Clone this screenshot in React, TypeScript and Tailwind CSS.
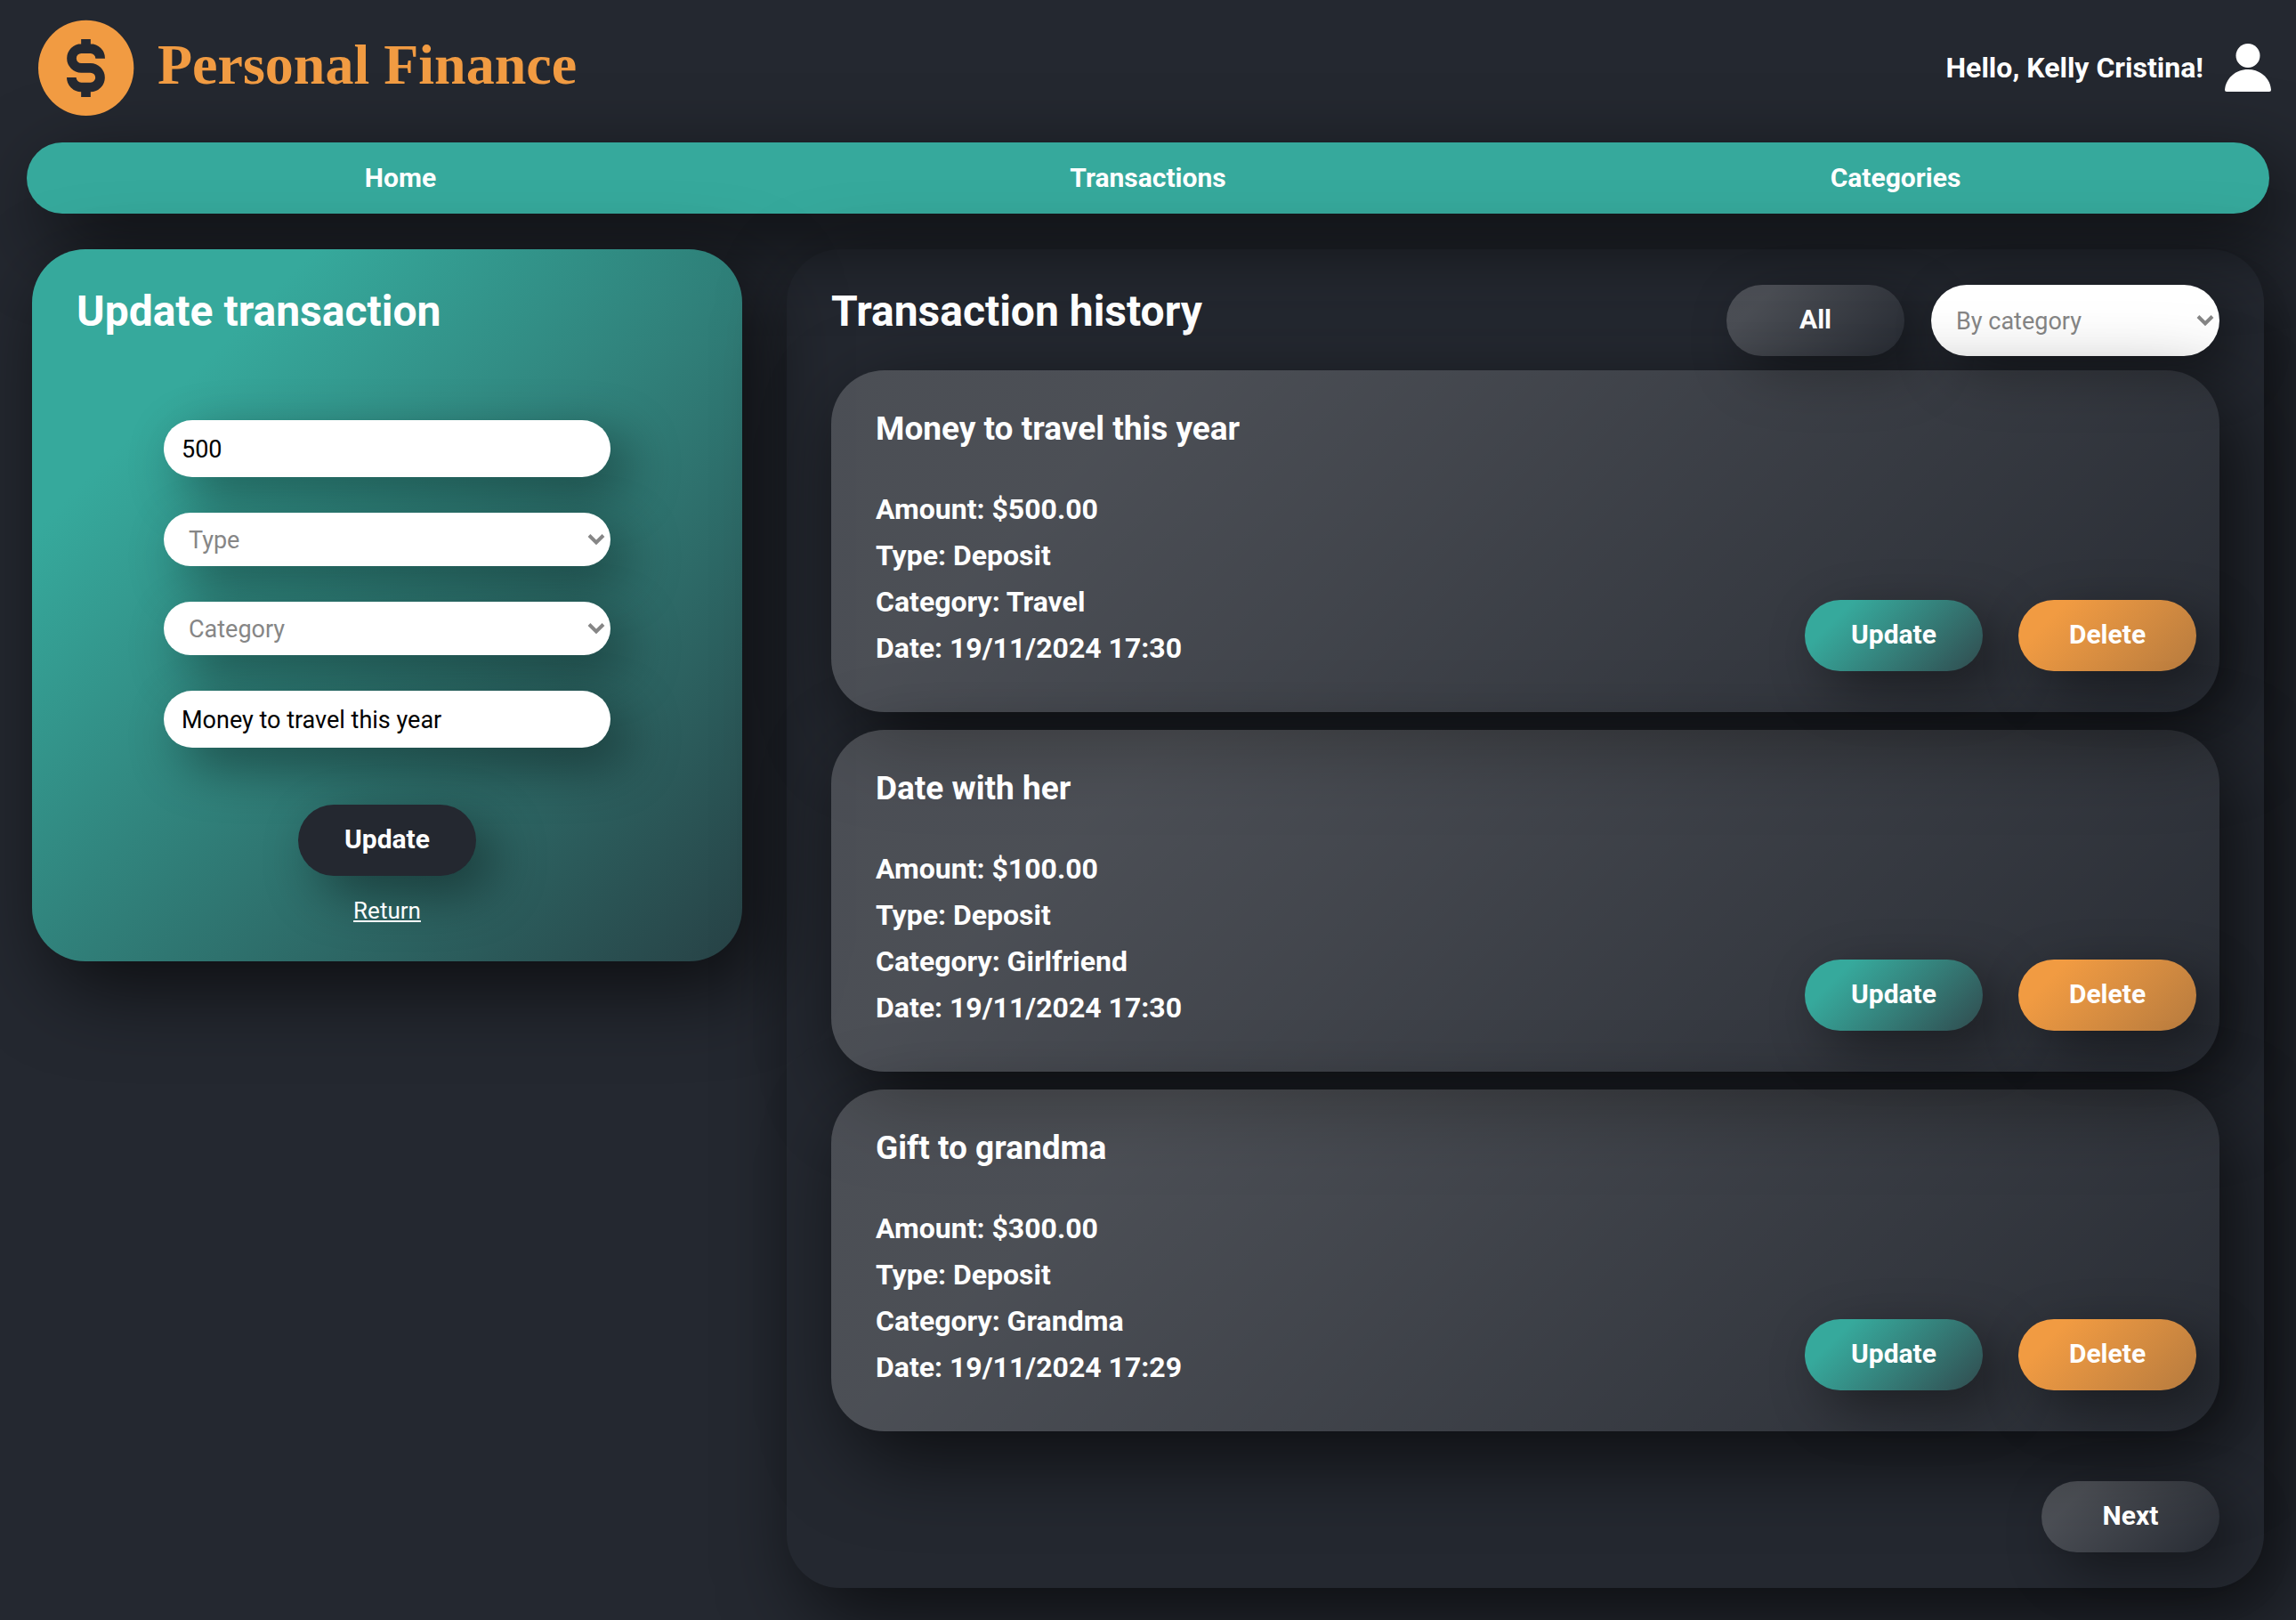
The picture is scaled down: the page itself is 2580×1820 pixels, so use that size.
import { useState } from "react";

type Transaction = {
  title: string;
  amount: string;
  type: string;
  category: string;
  date: string;
};

const transactions: Transaction[] = [
  { title: "Money to travel this year", amount: "$500.00", type: "Deposit", category: "Travel", date: "19/11/2024 17:30" },
  { title: "Date with her", amount: "$100.00", type: "Deposit", category: "Girlfriend", date: "19/11/2024 17:30" },
  { title: "Gift to grandma", amount: "$300.00", type: "Deposit", category: "Grandma", date: "19/11/2024 17:29" },
];

const panelShadow = "shadow-[20px_30px_90px_rgba(0,0,0,0.65)]";
const controlShadow = "shadow-[20px_20px_60px_rgba(0,0,0,0.42)]";
const pill = "h-20 w-[200px] rounded-full pb-1 text-[30px] font-bold text-white " + controlShadow;
const grayGradient = "bg-[linear-gradient(135deg,rgba(255,255,255,0.18)_20%,rgba(255,255,255,0.02))]";
const tealGradient = "bg-[linear-gradient(135deg,#36a99c_20%,rgba(54,169,156,0.2))]";
const orangeGradient = "bg-[linear-gradient(135deg,#f19b42_20%,rgba(241,155,66,0.7))]";
const field = "w-full rounded-[32px] bg-white pt-0.5 text-[27px] outline-none " + controlShadow;

function DollarLogo() {
  return (
    <svg viewBox="0 0 324 324" className="size-[108px]" aria-hidden="true">
      <circle cx="161" cy="163" r="161" fill="#f19b42" />
      <path
        d="M209 131A33 33 0 0 0 176 98H145A32.500 32.500 0 0 0 145 163H176A32.500 32.500 0 0 1 176 228H145A33 33 0 0 1 112 195M160.500 66V98M160.500 228V261"
        fill="none"
        stroke="#242830"
        strokeWidth="32"
      />
    </svg>
  );
}

function PersonIcon() {
  return (
    <svg viewBox="0 0 52 54" className="h-[54px] w-[52px]" fill="#fff" aria-hidden="true">
      <circle cx="26" cy="13.5" r="13.5" />
      <path d="M2 54Q0 54 0 52C1 39 12 29 26 29S51 39 52 52Q52 54 50 54Z" />
    </svg>
  );
}

function SelectBox({ label, options, className }: { label: string; options: string[]; className: string }) {
  return (
    <div className="grid w-full items-center">
      <select aria-label={label} defaultValue="" className={"col-start-1 row-start-1 appearance-none pl-7 text-[#868686] " + className}>
        <option value="">{label}</option>
        {options.map((o) => (
          <option key={o}>{o}</option>
        ))}
      </select>
      <svg viewBox="0 0 20 14" className="pointer-events-none col-start-1 row-start-1 mr-1.5 h-3.5 w-5 justify-self-end" fill="none" stroke="#868686" strokeWidth="4" aria-hidden="true">
        <path d="M2 2.500L10 10.500L18 2.500" />
      </svg>
    </div>
  );
}

function UpdateForm() {
  const [amount, setAmount] = useState("500");
  const [description, setDescription] = useState("Money to travel this year");
  return (
    <section className={"w-[798px] shrink-0 rounded-[60px] px-[50px] pt-10 pb-[38px] " + tealGradient + " " + panelShadow}>
      <h2 className="text-5xl leading-[60px] font-bold">Update transaction</h2>
      <form className="mx-auto mt-[92px] flex w-[502px] flex-col items-center" onSubmit={(e) => e.preventDefault()}>
        <div className="flex w-full flex-col gap-10">
          <input aria-label="Amount" className={field + " h-16 px-5 text-black"} value={amount} onChange={(e) => setAmount(e.target.value)} />
          <SelectBox label="Type" options={["Deposit", "Expense"]} className={field + " h-[60px]"} />
          <SelectBox label="Category" options={["Travel", "Girlfriend", "Grandma"]} className={field + " h-[60px]"} />
          <input aria-label="Description" className={field + " h-16 px-5 text-black"} value={description} onChange={(e) => setDescription(e.target.value)} />
        </div>
        <button type="submit" className={pill + " mt-16 bg-[#242830]"}>Update</button>
        <a href="#" className="mt-5 text-[26px] leading-[38px] underline">Return</a>
      </form>
    </section>
  );
}

function TransactionCard({ item }: { item: Transaction }) {
  return (
    <article className={"flex items-end justify-between rounded-[60px] pt-10 pr-[26px] pb-[46px] pl-[50px] " + grayGradient + " " + panelShadow}>
      <div>
        <h3 className="mb-[38px] text-[37px] leading-[52px] font-bold">{item.title}</h3>
        <div className="text-[32px] leading-[52px] font-bold">
          <p>Amount: {item.amount}</p>
          <p>Type: {item.type}</p>
          <p>Category: {item.category}</p>
          <p>Date: {item.date}</p>
        </div>
      </div>
      <div className="flex gap-10">
        <button className={pill + " " + tealGradient}>Update</button>
        <button className={pill + " " + orangeGradient}>Delete</button>
      </div>
    </article>
  );
}

export default function App() {
  return (
    <div className="min-h-screen overflow-hidden bg-[#242830] pb-9 font-[Roboto,sans-serif] text-white">
      <header className="flex h-40 items-start justify-between pt-[22px] pr-7 pl-[43px]">
        <a href="#" className="flex items-center gap-[26px]">
          <DollarLogo />
          <span className="pb-1.5 font-['Liberation_Serif',serif] text-[64px] leading-[80px] font-bold text-[#f19b42]">Personal Finance</span>
        </a>
        <div className="flex h-[108px] items-center gap-6">
          <span className="text-[32px] font-bold">Hello, Kelly Cristina!</span>
          <PersonIcon />
        </div>
      </header>
      <nav className={"mx-[30px] grid h-20 grid-cols-3 items-center rounded-full bg-[#36a99c] pb-0.5 text-center text-[30px] font-bold " + panelShadow}>
        <a href="#">Home</a>
        <a href="#">Transactions</a>
        <a href="#">Categories</a>
      </nav>
      <main className="mx-9 mt-10 flex items-start gap-[50px]">
        <UpdateForm />
        <section className={"min-w-0 grow rounded-[60px] px-[50px] py-10 " + panelShadow}>
          <div className="mb-4 flex items-start justify-between">
            <h2 className="text-5xl leading-[60px] font-bold">Transaction history</h2>
            <div className="flex gap-[30px]">
              <button className={pill + " shrink-0 " + grayGradient}>All</button>
              <div className="w-[324px]">
                <SelectBox label="By category" options={["Travel", "Girlfriend", "Grandma"]} className={"h-20 w-full rounded-full bg-white pt-0.5 text-[27px] outline-none " + controlShadow} />
              </div>
            </div>
          </div>
          <div className="flex flex-col gap-5">
            {transactions.map((t) => (
              <TransactionCard key={t.title} item={t} />
            ))}
          </div>
          <div className="mt-14 flex justify-end">
            <button className={pill + " " + grayGradient}>Next</button>
          </div>
        </section>
      </main>
    </div>
  );
}
